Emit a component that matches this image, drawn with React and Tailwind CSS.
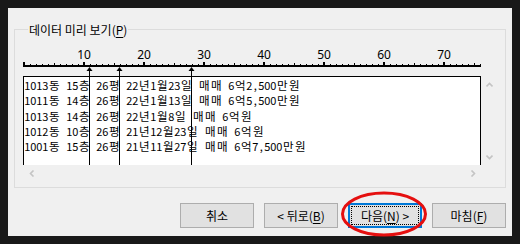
import React from 'react';

const rows = [
  '1013동 15층 26평 22년1월23일 매매 6억2,500만원',
  '1011동 14층 26평 22년1월13일 매매 6억5,500만원',
  '1013동 14층 26평 22년1월8일 매매 6억원',
  '1012동 10층 26평 21년12월23일 매매 6억원',
  '1001동 15층 26평 21년11월27일 매매 6억7,500만원',
];

const breaks = [66, 96, 168];

// fixed-width cells: one byte = 6px, hangul = 12px, like the wizard's grid
const Cell = ({ ch }) => {
  const wide = ch.charCodeAt(0) > 0x7f;
  return (
    <span
      className={
        wide
          ? 'inline-block align-top w-[12px] h-[15px] leading-[15px] text-center text-[11.5px] tracking-[-0.4px]'
          : 'inline-block align-top w-[6px] h-[15px] leading-[15px] text-center text-[11px] tracking-[-0.6px]'
      }
    >
      {ch === ' ' ? '\u00a0' : ch}
    </span>
  );
};

const Ruler = () => {
  const ticks = [];
  for (let i = 0; i <= 76; i++) {
    const x = 1 + i * 6;
    if (i % 10 === 0) ticks.push(<rect key={i} x={x - 1} y={1} width={2} height={4} />);
    else if (i % 5 === 0) ticks.push(<rect key={i} x={x} y={2} width={1} height={3} />);
    else ticks.push(<rect key={i} x={x} y={3} width={1} height={2} />);
  }
  return (
    <svg className="block" width="460" height="6" shapeRendering="crispEdges">
      <g fill="#000">
        <rect x={0} y={4} width={458} height={2} />
        {ticks}
      </g>
    </svg>
  );
};

const Chevron = ({ dir }) => {
  const pts = {
    up: '0.5,4.5 3.5,1.5 6.5,4.5',
    down: '0.5,1.5 3.5,4.5 6.5,1.5',
    left: '4.5,0.5 1.5,3.5 4.5,6.5',
    right: '1.5,0.5 4.5,3.5 1.5,6.5',
  }[dir];
  const vert = dir === 'up' || dir === 'down';
  return (
    <svg width={vert ? 7 : 6} height={vert ? 6 : 7}>
      <polyline points={pts} fill="none" stroke="#c4c4c4" strokeWidth="1.6" />
    </svg>
  );
};

const Mn = ({ children }) => <span className="underline underline-offset-2">{children}</span>;

const Btn = ({ children }) => (
  <div className="w-[74px] h-[25px] flex items-center justify-center bg-[#e1e1e1] border border-[#adadad] text-[12px] text-black">
    {children}
  </div>
);

export default function App() {
  return (
    <div className="relative w-[520px] h-[244px] bg-[#191919] p-[8px] font-['Noto_Sans_CJK_KR',sans-serif]">
      <div className="w-full h-full bg-[#f0f0f0] flex flex-col">
        <fieldset className="ml-[6px] mt-[14px] w-[492px] border border-[#dcdcdc] pl-[8px] pb-[5px]">
          <legend className="ml-[5px] px-[1px] text-[12px] leading-[15px] text-black">
            데이터 미리 보기(<Mn>P</Mn>)
          </legend>

          <div className="mt-[12px] h-[12px] flex pl-[31px] font-['Noto_Sans',sans-serif] text-[12px] leading-[12px] text-black">
            {[10, 20, 30, 40, 50, 60, 70].map((n) => (
              <div key={n} className="w-[60px] text-center">{n}</div>
            ))}
          </div>

          <div className="relative">
            <Ruler />
            <div className="h-[9px]" />

            <div className="flex flex-col w-[475px]">
              <div className="flex">
                <div className="w-[458px] h-[89px] bg-white border-t border-l border-r border-black overflow-hidden">
                  <div className="pt-[1px] font-['Noto_Sans_CJK_KR',sans-serif] text-black whitespace-nowrap">
                    {rows.map((r) => (
                      <div key={r} className="flex h-[15.33px]">
                        {Array.from(r).map((ch, i) => (
                          <Cell key={i} ch={ch} />
                        ))}
                      </div>
                    ))}
                  </div>
                </div>
                <div className="w-[17px] h-[89px] flex flex-col justify-between">
                  <div className="h-[17px] flex items-center justify-center"><Chevron dir="up" /></div>
                  <div className="h-[17px] flex items-center justify-center"><Chevron dir="down" /></div>
                </div>
              </div>
              <div className="flex h-[17px]">
                <div className="w-[458px] flex justify-between">
                  <div className="w-[17px] flex items-center justify-center"><Chevron dir="left" /></div>
                  <div className="w-[17px] flex items-center justify-center"><Chevron dir="right" /></div>
                </div>
              </div>
            </div>

            <svg className="absolute left-0 top-[6px]" width="460" height="98" shapeRendering="crispEdges">
              {breaks.map((x) => (
                <g key={x} fill="#000">
                  <polygon points={`${x + 0.5},0 ${x + 3.5},4 ${x - 2.5},4`} shapeRendering="auto" />
                  <rect x={x} y={3} width={1} height={95} />
                </g>
              ))}
            </svg>
          </div>
        </fieldset>

        <div className="mt-[15px] flex justify-end gap-[10px] pr-[6px]">
          <Btn>취소</Btn>
          <Btn>&lt; 뒤로(<Mn>B</Mn>)</Btn>
          <div className="w-[74px] h-[25px] p-[1px] bg-[#e1e1e1] border-2 border-[#0078d7]">
            <div className="w-full h-full flex items-center justify-center border border-dotted border-black text-[12px] text-black">
              다음(<Mn>N</Mn>) &gt;
            </div>
          </div>
          <Btn>마침(<Mn>F</Mn>)</Btn>
        </div>
      </div>

      <svg className="absolute left-[340px] top-[191px]" width="88" height="48">
        <ellipse cx="44" cy="23" rx="41.5" ry="21" fill="none" stroke="#e50f0f" strokeWidth="3" />
      </svg>
    </div>
  );
}
